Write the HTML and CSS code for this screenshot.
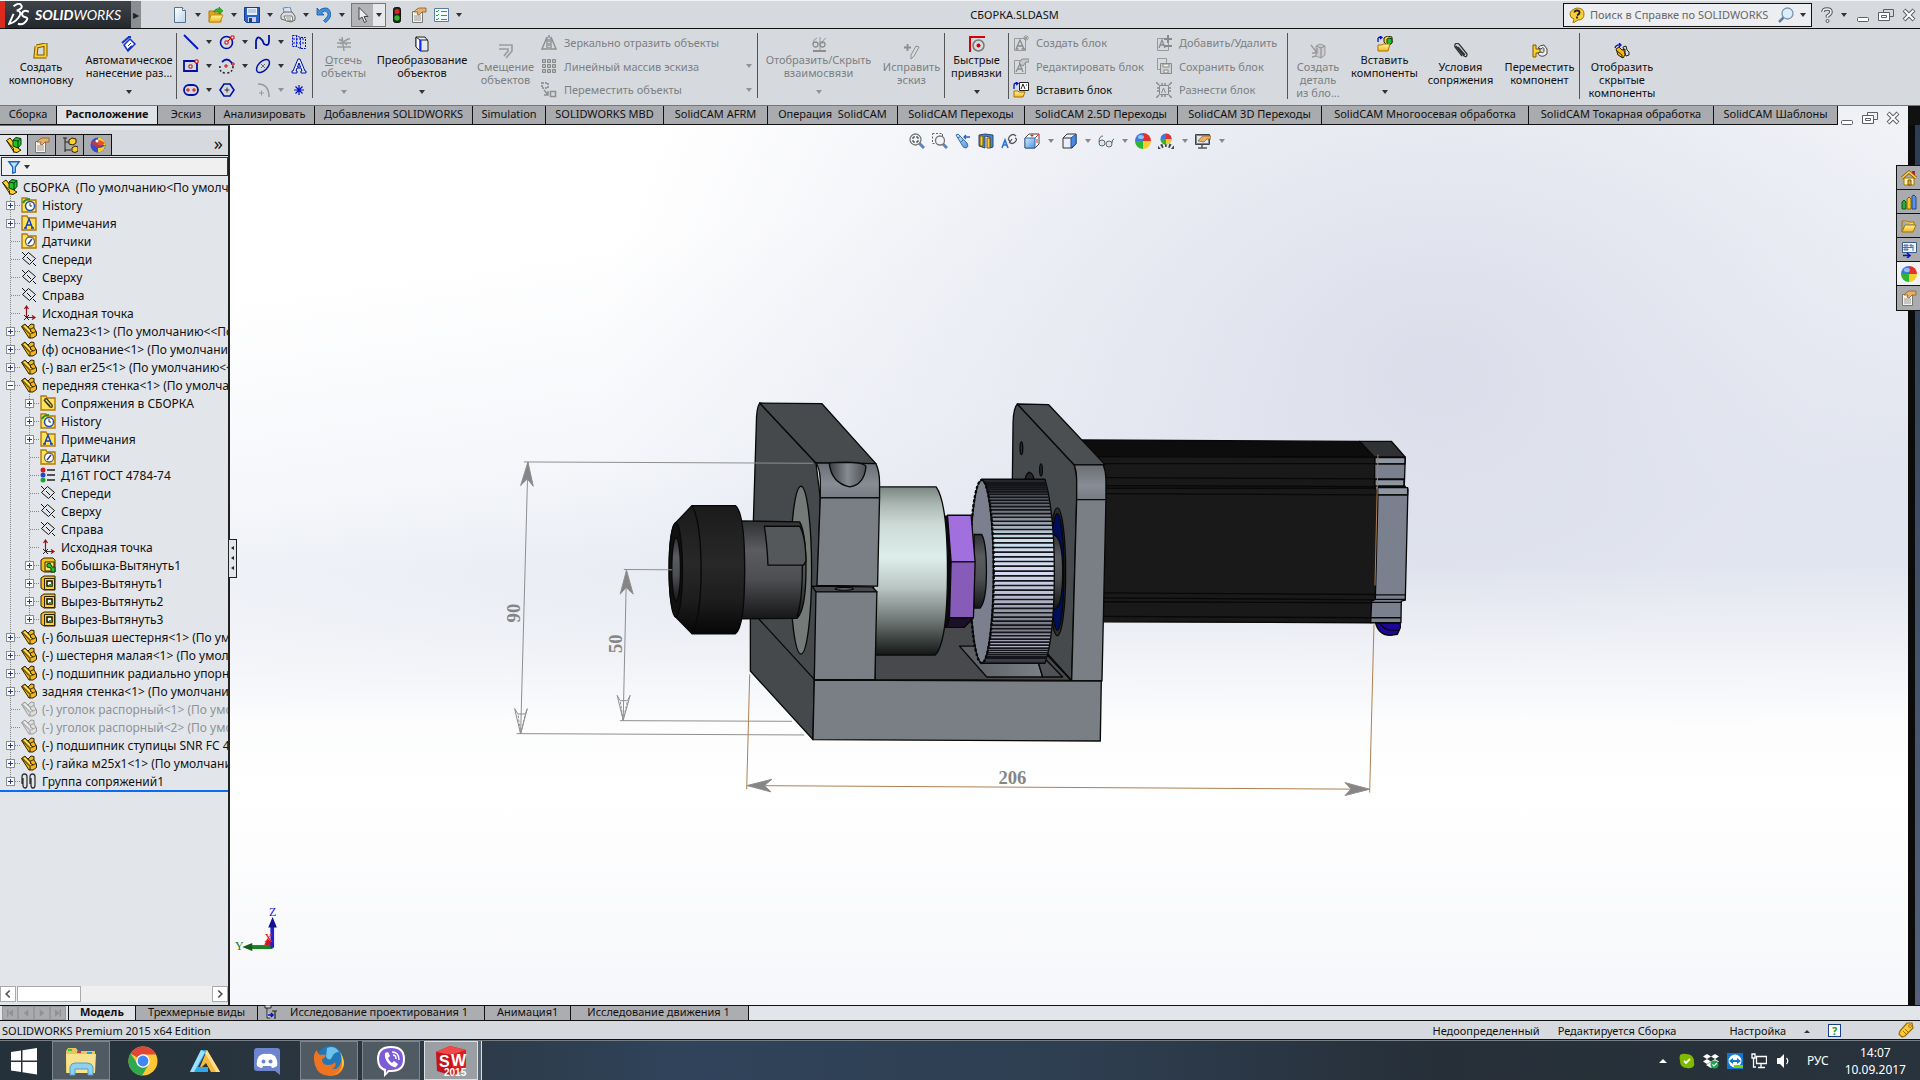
FILE: index.html
```html
<!DOCTYPE html>
<html lang="ru">
<head>
    <meta charset="UTF-8">
    <meta name="viewport" content="width=device-width, initial-scale=1.0">
    <title>СБОРКА.SLDASM - SOLIDWORKS</title>
    <link rel="stylesheet" href="styles.css">
</head>
<body>
    <!-- Icon set -->
    <svg class="defs" width="0" height="0" aria-hidden="true">
        <defs>
            <linearGradient id="paper" x1="0" y1="0" x2="1" y2="1"><stop offset="0" stop-color="#fff"/><stop offset="1" stop-color="#b9d3ea"/></linearGradient>
            <linearGradient id="gold" x1="0" y1="0" x2="0" y2="1"><stop offset="0" stop-color="#fff3a0"/><stop offset="1" stop-color="#f0b820"/></linearGradient>
            <linearGradient id="sky" x1="0" y1="0" x2="1" y2="1"><stop offset="0" stop-color="#d4ecff"/><stop offset="1" stop-color="#4f93dd"/></linearGradient>
        </defs>
        <symbol id="i-new" viewBox="0 0 16 16"><path d="M2.5.5h8l3 3v12h-11z" fill="url(#paper)" stroke="#5b7186"/><path d="M10.500.5v3h3" fill="#fff" stroke="#5b7186"/></symbol>
        <symbol id="i-open" viewBox="0 0 16 16"><path d="M1 4h5l1 2h6v9H1z" fill="#e5a51a" stroke="#b27a08"/><path d="M3 8h12l-3 7H1z" fill="url(#gold)" stroke="#c48d10"/><path d="M6 5q1-4 5-3V0l4 4-4 3V5q-3-1-5 0z" fill="#35b52a" stroke="#167a10" stroke-width=".6"/></symbol>
        <symbol id="i-save" viewBox="0 0 16 16"><path d="M.5.5h15v15h-13l-2-2z" fill="#2a62c8" stroke="#173c8c"/><path d="M3 1h10v7H3z" fill="#e6eefb"/><path d="M4 3h8M4 5h8" stroke="#8fa8d0"/><path d="M4 10h8v5H4z" fill="#ccd"/><path d="M5 11h3v4H5z" fill="#223c7a"/></symbol>
        <symbol id="i-print" viewBox="0 0 16 16"><path d="M4 5 3 1l7-1 2 6" fill="#cfe4fb" stroke="#6a89ad"/><path d="m1 8 3-3h8l3 4v4l-4 2-10-3z" fill="#ddd" stroke="#666"/><path d="M4 9h8l1 5H6z" fill="#fff" stroke="#777"/><path d="M6 11h5M7 13h4" stroke="#888"/></symbol>
        <symbol id="i-undo" viewBox="0 0 16 16"><path d="M1 1v7h7L5.500 5.500q4-3 6 0t-3 7l-1 1 2 2q6-4 5-9.500T9 1 3.500 3.500z" fill="#3f8fe0" stroke="#1c569c" stroke-width=".8"/></symbol>
        <symbol id="i-cursor" viewBox="0 0 16 16"><path d="M4 .5v12l3-2.500 2.500 5.500 2-1-2.500-5h4z" fill="#eee" stroke="#444"/></symbol>
        <symbol id="i-light" viewBox="0 0 16 16"><rect x="4.500" y=".5" width="7" height="15" rx="2" fill="#222" stroke="#111"/><circle cx="8" cy="4.500" r="2.500" fill="#e2231a"/><circle cx="8" cy="11" r="2.700" fill="#2fb52a"/></symbol>
        <symbol id="i-props" viewBox="0 0 16 16"><path d="M1.500 4.500h10v11h-10z" fill="#f4f2ec" stroke="#777"/><path d="M3 9h7M3 11h7M3 13h7" stroke="#999"/><path d="M3 5q2-3 5-4h7v4h-4l-3 3-2-1 1-2z" fill="#e8b06c" stroke="#8c5b22" stroke-width=".8"/></symbol>
        <symbol id="i-options" viewBox="0 0 16 16"><path d="M1.500 1.500h14v13h-14z" fill="#f3f8ff" stroke="#5c7c9c"/><path d="m3 4 1 1 2-2m-3 5 1 1 2-2m-3 5 1 1 2-2" fill="none" stroke="#2a9a30"/><path d="M8 4.500h6M8 8.500h6M8 12.500h6" stroke="#5577a0"/></symbol>
        <symbol id="i-layout" viewBox="0 0 16 16"><path d="m3.500 3.500 9-2v12M3.500 3.500l-1 10h11" fill="none" stroke="#7a5600" stroke-width="4"/><path d="m3.500 3.500 9-2v12M3.500 3.500l-1 10h11" fill="none" stroke="#ffcf30" stroke-width="2"/></symbol>
        <symbol id="i-dim" viewBox="0 0 16 16"><path d="m3 9 6-6 5 5-7 7z" fill="#fff" stroke="#1433c0" stroke-width="1.500"/><path d="m1 7 7-6M7 1h3M11 10l-4 4" stroke="#1433c0" stroke-width="2"/><path d="m7 10 3-3" stroke="#444"/></symbol>
        <symbol id="i-line" viewBox="0 0 16 16"><path d="m1 1 14 14" stroke="#0013c8" stroke-width="1.800"/></symbol>
        <symbol id="i-rect" viewBox="0 0 16 16"><path d="M1 3h13v10H1z" fill="none" stroke="#0013a0" stroke-width="1.800"/><path d="M6 7h3v3H6zM12 2h3v3h-3z" fill="#fff" stroke="#c00"/></symbol>
        <symbol id="i-slot" viewBox="0 0 16 16"><rect x="1" y="3" width="14" height="10" rx="5" fill="none" stroke="#0013a0" stroke-width="1.800"/><path d="M4 7h2v2H4zM10 7h2v2h-2z" fill="#fff" stroke="#c00"/></symbol>
        <symbol id="i-circle" viewBox="0 0 16 16"><circle cx="7.500" cy="8.500" r="6" fill="none" stroke="#0013a0" stroke-width="1.600"/><path d="M6 7h3v3H6zM12 2h3v3h-3zM9 7l3-3" fill="#fff" stroke="#c00"/></symbol>
        <symbol id="i-arc" viewBox="0 0 16 16"><path d="M3 4q5-5 9 0l2 3" fill="none" stroke="#0013a0" stroke-width="1.800"/><path d="M14 8q0 7-7 7T1 8" fill="none" stroke="#222" stroke-width="1.500" stroke-dasharray="2 2"/><path d="M6 7h2v2H6zM13 5h2v2h-2z" fill="#fff" stroke="#c00"/></symbol>
        <symbol id="i-poly" viewBox="0 0 16 16"><path d="M5 2h6l4 6-4 6H5L1 8z" fill="none" stroke="#0013a0" stroke-width="1.600"/><path d="M5.500 8h5M8 5.500v5" stroke="#333"/></symbol>
        <symbol id="i-spline" viewBox="0 0 16 16"><path d="M1 15V7q1-5 4-3t4 6q5 3 5-3V1" fill="none" stroke="#0013a0" stroke-width="1.800"/></symbol>
        <symbol id="i-ellipse" viewBox="0 0 16 16"><ellipse cx="8" cy="8" rx="8" ry="4.500" transform="rotate(-45 8 8)" fill="none" stroke="#0013a0" stroke-width="1.500"/><path d="m6 6 4 4m0-4-4 4" stroke="#555" stroke-width=".8"/></symbol>
        <symbol id="i-fillet" viewBox="0 0 16 16"><path d="M3 2q11 0 11 13" fill="none" stroke="#9a9a9a" stroke-width="1.500"/><path d="M4 11h5M6.500 8.500v5" stroke="#999"/></symbol>
        <symbol id="i-pattern" viewBox="0 0 16 16"><path d="M1.500 1.500h4l4 2h5v11h-5l-4-2h-4zM5.500 1.500v11m4-9v11M2 5h12M2 9h12" fill="none" stroke="#0013c8" stroke-dasharray="2 1"/></symbol>
        <symbol id="i-text" viewBox="0 0 16 16"><path d="M7 1h2l5 12h1v2h-5v-2h1l-1-3H6l-1 3h1v2H1v-2h1zm1 4L6.500 9h3z" fill="#dfe6fb" stroke="#0013a0" fill-rule="evenodd"/></symbol>
        <symbol id="i-point" viewBox="0 0 16 16"><path d="M3 8h10M8 3v10M4.500 4.500l7 7m0-7-7 7" stroke="#0013c8" stroke-width="1.200"/></symbol>
        <symbol id="i-trim" viewBox="0 0 16 16"><path d="M1 7h14M1 11h14M6 1l2 14M12 3 4 8m-1-5 8 6m-8-5h3M11 3h3" fill="none" stroke="#9a9a9a" stroke-width="1.500"/></symbol>
        <symbol id="i-convert" viewBox="0 0 16 16"><path d="M2 1h9l3 4v10H6L2 11z" fill="#e6eaf0" stroke="#222"/><path d="M2 1v10l4 4V4zM6 4h8" fill="#fff" stroke="#222"/><path d="M6.500 4v11" stroke="#0a2fff" stroke-width="2"/></symbol>
        <symbol id="i-offset" viewBox="0 0 16 16"><path d="M1 2h13v6l-6 7M1 6h9v2l-4 5" fill="none" stroke="#9c9c9c" stroke-width="1.700"/></symbol>
        <symbol id="i-mirror" viewBox="0 0 16 16"><path d="M6 2v12H1zM10 2v12h5z" fill="none" stroke="#8e8e8e" stroke-width="1.400"/><path d="M8 0v16" stroke="#8e8e8e" stroke-width="1.500" stroke-dasharray="3 1"/></symbol>
        <symbol id="i-array" viewBox="0 0 16 16"><path d="M1.500 1.500h3v3h-3zm5 0h3v3h-3zm5 0h3v3h-3zm-10 5h3v3h-3zm5 0h3v3h-3zm5 0h3v3h-3zm-10 5h3v3h-3zm5 0h3v3h-3zm5 0h3v3h-3z" fill="#bbb" stroke="#888"/></symbol>
        <symbol id="i-move" viewBox="0 0 16 16"><path d="M1 1h6v5H1z" fill="none" stroke="#999" stroke-width="2" stroke-dasharray="2 1"/><path d="m3 8 4 5m0-4v4H3M9.500 9.500h5v5h-5z" fill="none" stroke="#8e8e8e" stroke-width="1.500"/></symbol>
        <symbol id="i-relations" viewBox="0 0 16 16"><path d="M2 15h13" stroke="#8e8e8e" stroke-width="2"/><path d="M9 1v13M2 8q0-5 4-6M11 8q0-4 4-6" fill="none" stroke="#999"/><circle cx="4.500" cy="8.500" r="2.500" fill="none" stroke="#8e8e8e" stroke-width="1.300"/><circle cx="11.500" cy="8.500" r="2.500" fill="none" stroke="#8e8e8e" stroke-width="1.300"/></symbol>
        <symbol id="i-repair" viewBox="0 0 16 16"><path d="M0 4.500h7M3.500 1v7" stroke="#8e8e8e" stroke-width="1.800"/><path d="m7 12 5-9 3 1-5 9-3 3z" fill="#ddd" stroke="#8e8e8e"/></symbol>
        <symbol id="i-snap" viewBox="0 0 16 16"><path d="M1 16V1h15" fill="none" stroke="#d4000a" stroke-width="2"/><circle cx="9.500" cy="9.500" r="5.500" fill="none" stroke="#777" stroke-width="1.500"/><circle cx="9.500" cy="9.500" r="2" fill="#d4000a"/></symbol>
        <symbol id="i-block" viewBox="0 0 16 16"><path d="M1.500 3.500h11v12h-11z" fill="none" stroke="#999"/><path d="m3 14 4-9 4 9M4.500 11h5M2.500 14h3m3 0h4" fill="none" stroke="#8a8a8a" stroke-width="1.300"/><path d="M13 0v6m-3-3h6m-5-2 4 4m0-4-4 4" stroke="#999"/></symbol>
        <symbol id="i-block-edit" viewBox="0 0 16 16"><path d="M1.500 2.500h11v13h-11z" fill="none" stroke="#999"/><path d="m3 14 4-8 3 8M4.500 11h5" fill="none" stroke="#8a8a8a" stroke-width="1.300"/><path d="m6 5 3-4h7v3h-3l-3 4z" fill="#c8c8c8" stroke="#8a8a8a"/></symbol>
        <symbol id="i-block-insert" viewBox="0 0 16 16"><path d="M6.500.5h9v8h-9z" fill="#fff" stroke="#222"/><path d="m8 7 2-5 2 5m1-4h1" fill="none" stroke="#222"/><path d="M1 7V3q0-2 3-2M3 0l2 1.500L3 3" fill="none" stroke="#0013c8" stroke-width="1.300"/><path d="M1 9h4l1 1h6l-2 5H1z" fill="url(#gold)" stroke="#a87300"/></symbol>
        <symbol id="i-block-add" viewBox="0 0 16 16"><path d="M1.500 3.500h11v12h-11z" fill="none" stroke="#999"/><path d="m3 13 3-8 3 8M4 10h4" fill="none" stroke="#8a8a8a" stroke-width="1.300"/><path d="M12 0v8M8 4h8M8 11h8" stroke="#8a8a8a" stroke-width="2"/></symbol>
        <symbol id="i-block-save" viewBox="0 0 16 16"><path d="M1.500.5h9v11h-9z" fill="none" stroke="#999"/><path d="M4.500 5.500h11v10h-11z" fill="#d0d0d0" stroke="#8a8a8a"/><path d="M7 6h6v3H7zm1 6h4v3H8z" fill="#eee" stroke="#8a8a8a"/></symbol>
        <symbol id="i-block-explode" viewBox="0 0 16 16"><path d="M3.500 3.500h9v9h-9z" fill="none" stroke="#8a8a8a"/><path d="m0 0 3 3M16 0l-3 3M0 16l3-3m13 3-3-3M1 6h2M1 9h2m10-3h2m-2 3h2M6 1v2m3-2v2m-3 10v2m3-2v2" stroke="#8a8a8a" stroke-width="1.500"/><path d="m5.500 11 2-5 2 5" fill="none" stroke="#8a8a8a"/></symbol>
        <symbol id="i-asm" viewBox="0 0 16 16"><path d="M.5 3.500 4 1l9 11 2 1-4 2.500-3-.5z" fill="#ffd02c" stroke="#2a2200"/><path d="m.5 3.500 7 8v4" fill="none" stroke="#2a2200"/><path d="m7 3 3-2.500 5 1v6L12 11 7 9z" fill="#1fbf2f" stroke="#063f0a"/><path d="m7 3 5 1v6.500M12 4l3-2.500" fill="none" stroke="#063f0a"/></symbol>
        <symbol id="i-part" viewBox="0 0 16 16"><path d="M.5 3.500 4 1l3 3 3-3 3 .5V5l2.500 4v3.500L12 15H8z" fill="#f6b51a" stroke="#2d2300"/><path d="m1 3.500 8 8V15" fill="none" stroke="#2d2300"/><path d="m1.500 3 2.500-1.500 8 8.500-2.500 1z" fill="#ffdf55" stroke="#2d2300" stroke-width=".7"/><path d="m7 4 2.500 2L13 4.500M9.500 6v2.500L12 10l3-1.500" fill="none" stroke="#2d2300" stroke-width=".9"/></symbol>
        <symbol id="i-part-off" viewBox="0 0 16 16"><path d="M.5 3.500 4 1l3 3 3-3 3 .5V5l2.500 4v3.500L12 15H8z" fill="#dedede" stroke="#999"/><path d="m1 3.500 8 8V15" fill="none" stroke="#999"/><path d="m1.500 3 2.500-1.500 8 8.500-2.500 1z" fill="#eee" stroke="#999" stroke-width=".7"/><path d="m7 4 2.500 2L13 4.500M9.500 6v2.500L12 10l3-1.500" fill="none" stroke="#999" stroke-width=".9"/></symbol>
        <symbol id="i-makepart" viewBox="0 0 16 16"><path d="m6 3 4-2 5 2v9l-4 3-5-2z" fill="#ccc" stroke="#999"/><path d="m6 3 5 2v10m0-10 4-2M1 2l6 8M7 5v5H2m0 4 4-1" fill="none" stroke="#999" stroke-width="1.300"/></symbol>
        <symbol id="i-insert" viewBox="0 0 16 16"><path d="M1 6V3q0-2 3-2M3 0l2 1.500L3 3" fill="none" stroke="#0013c8" stroke-width="1.300"/><path d="m7 2 3-2 5 1v6l-4 3-4-4z" fill="#ffd02c" stroke="#2a2200"/><path d="m10 3 2-1 3 1v4l-3 2-2-2z" fill="#1fbf2f" stroke="#063f0a"/><path d="M1 9h4l1-1h7l-2 7H1z" fill="url(#gold)" stroke="#a87300"/></symbol>
        <symbol id="i-clip" viewBox="0 0 16 16"><path d="m3 3 8 10q3 2 3-2L6 1Q1-1 2 4l7 9m3-1L5 4" fill="none" stroke="#333" stroke-width="1.300"/></symbol>
        <symbol id="i-movecomp" viewBox="0 0 16 16"><path d="M1 2h3v4h4v4H4v4H1z" fill="#ffd02c" stroke="#7a5600"/><path d="M6 5q2-3 6-3l3 4v5l-3 2q-5 1-6-3l3-1q3 2 3-2T9 6z" fill="#eee" stroke="#444"/></symbol>
        <symbol id="i-showhid" viewBox="0 0 16 16"><path d="M1 5q1-4 6-3M5 0l2 2-2 2" fill="none" stroke="#0013c8" stroke-width="1.300"/><path d="m2 6 3-2 3 3 3-1v6l-2 3-5-3z" fill="#f6b51a" stroke="#2d2300"/><path d="m9 4 3-1 1 4 2 2v3l-3 1-2-5zM3 8l5 4v3" fill="none" stroke="#222"/></symbol>
        <symbol id="i-folder" viewBox="0 0 16 16"><path d="M1 1h5l1 2h8v12H1z" fill="#ffe25a" stroke="#b27a08" stroke-width="1.400"/></symbol>
        <symbol id="i-history" viewBox="0 0 16 16"><use href="#i-folder"/><circle cx="9" cy="9" r="4.500" fill="#fff" stroke="#1b55b8" stroke-width="1.500"/><path d="M9 6v3h2" fill="none" stroke="#333"/><path d="M2 6q2-4 7-4" fill="none" stroke="#22922a" stroke-width="2"/></symbol>
        <symbol id="i-notes" viewBox="0 0 16 16"><use href="#i-folder"/><path d="m4.500 13 3.500-9 3.500 9M6 10h4M3 13h3m4 0h3" fill="none" stroke="#123fc0" stroke-width="1.400"/></symbol>
        <symbol id="i-sensor" viewBox="0 0 16 16"><use href="#i-folder"/><circle cx="9" cy="8.500" r="4.500" fill="#fff" stroke="#666" stroke-width="1.300"/><path d="m7 11 4-5" stroke="#223fa0" stroke-width="1.500"/></symbol>
        <symbol id="i-mates" viewBox="0 0 16 16"><use href="#i-folder"/><path d="m4 5 6 7q3 1 2-2L7 4Q4 3 5 6l5 5" fill="none" stroke="#333" stroke-width="1.300"/></symbol>
        <symbol id="i-plane" viewBox="0 0 16 16"><path d="m7.500 1.500 7 6-6 6-7-6zM1 1l3 3m8 8 3 3M6 6l4 4" fill="none" stroke="#111"/></symbol>
        <symbol id="i-origin" viewBox="0 0 16 16"><path d="M5.500 13V1M3.500 4l2-3 2 3M5 12.500h9m-3-2 3 2-3 2" fill="none" stroke="#9c0f14" stroke-width="1.200"/><path d="m3 10 5 5m0-5-5 5" stroke="#222"/></symbol>
        <symbol id="i-material" viewBox="0 0 16 16"><circle cx="3" cy="3" r="2.500" fill="#d81820"/><circle cx="3" cy="8" r="2.500" fill="#2440d8"/><circle cx="3" cy="13" r="2.500" fill="#18a828"/><path d="M7 3h8M7 8h8M7 13h8" stroke="#222" stroke-width="1.500"/></symbol>
        <symbol id="i-boss" viewBox="0 0 16 16"><path d="m1 3 3-2h9l2 2v12H4l-3-2z" fill="#f6c01a" stroke="#2d2300"/><path d="M5 5h9v9H5z" fill="#ffe25a" stroke="#2d2300"/><path d="m7 7 3-1 2 4h3v5h-4V11L7 10z" fill="#25c23a" stroke="#063f0a"/></symbol>
        <symbol id="i-cut" viewBox="0 0 16 16"><path d="m1 3 3-2h11v14H4l-3-2z" fill="#f6c01a" stroke="#2d2300"/><path d="M4.500 3.500h10v11h-10z" fill="#ffd02c" stroke="#2d2300"/><path d="M7 6h5v5H7z" fill="#fff" stroke="#111" stroke-width="1.500"/><path d="M9 9h3v2H9z" fill="#1e9a2e"/></symbol>
        <symbol id="i-mategroup" viewBox="0 0 16 16"><path d="M1 11V4q0-3 2.500-3T6 4v8q0 3-2 3t-2-3V5M9 11V4q0-3 2.500-3T14 4v8q0 3-2 3t-2-3V5" fill="none" stroke="#333" stroke-width="1.300"/></symbol>
        <symbol id="i-config" viewBox="0 0 16 16"><path d="M1 1h4M3 1v14M3 5h4m-4 8h6" fill="none" stroke="#222"/><path d="m7 3 3-2 4 1v4l-3 2-4-1zm3 8 3-2 3 1v4l-3 1.500-3-1z" fill="#ffd02c" stroke="#2d2300"/></symbol>
        <symbol id="i-ball" viewBox="0 0 16 16"><path d="M8 8V0a8 8 0 0 1 8 8z" fill="#e33030"/><path d="M8 8h8a8 8 0 0 1-8 8z" fill="#f2cf2c"/><path d="M8 8v8a8 8 0 0 1-8-8z" fill="#2fb52f"/><path d="M8 8H0a8 8 0 0 1 8-8z" fill="#3b7be0"/><ellipse cx="6" cy="4" rx="3" ry="2" fill="#fff" opacity=".5"/></symbol>
        <symbol id="i-ball-dark" viewBox="0 0 16 16"><circle cx="8" cy="8" r="7.500" fill="#3350c8"/><path d="M8 8V.5A7.500 7.500 0 0 1 15.500 8z" fill="#f2cf2c"/><path d="M1 6q7-6 14 0-4 4-7 4T1 6z" fill="#e33030" opacity=".8"/><path d="M1 9q3 3 7 2v4.500Q2 15 1 9z" fill="#3350c8"/><path d="M8 11q5 0 7-3 0 7-7 7.500z" fill="#f2cf2c"/><circle cx="7" cy="4" r="1.500" fill="#fff"/></symbol>
        <symbol id="i-scene" viewBox="0 0 16 16"><path d="M0 16q8-8 16 0" fill="none" stroke="#444" stroke-width="4" stroke-dasharray="2 2"/><circle cx="8" cy="6" r="5.500" fill="#3b7be0"/><path d="M8 6V.5A5.500 5.500 0 0 1 13.500 6z" fill="#e33030"/><path d="M8 6h5.500A5.500 5.500 0 0 1 8 11.500z" fill="#f2cf2c"/><path d="M8 6v5.500A5.500 5.500 0 0 1 2.500 6z" fill="#2fb52f"/></symbol>
        <symbol id="i-funnel" viewBox="0 0 16 16"><path d="M2 2h12L9.500 8v6l-3 1V8z" fill="#bfe2ff" stroke="#1662c8" stroke-width="1.500"/></symbol>
        <symbol id="i-zoomfit" viewBox="0 0 16 16"><path d="m10 10 5 5" stroke="#5a86c0" stroke-width="3"/><circle cx="6.500" cy="6.500" r="5.500" fill="#eef4fa" stroke="#777" stroke-width="1.300"/><path d="M4 6V4h2m1 0h2v2m0 1v2H7M6 9H4V7" fill="none" stroke="#333"/></symbol>
        <symbol id="i-zoomarea" viewBox="0 0 16 16"><path d="M.5.5h10v10H.5z" fill="none" stroke="#666" stroke-dasharray="2 1.500"/><path d="m11 11 4 4" stroke="#5a86c0" stroke-width="3"/><circle cx="8" cy="7.500" r="4.500" fill="#eef4fa" stroke="#777" stroke-width="1.300"/></symbol>
        <symbol id="i-prev" viewBox="0 0 16 16"><path d="m1 2 2-1 9 9q2 4-1 5-3 0-4-3z" fill="url(#sky)" stroke="#3a6da8"/><path d="m3 5 3-2m0 6 3-3" stroke="#3a6da8"/><path d="M15 4H9m2-2L9 4l2 2" fill="none" stroke="#2a62c8" stroke-width="1.300"/></symbol>
        <symbol id="i-section" viewBox="0 0 16 16"><path d="m1 2 6-1 8 1v12l-3 1V4L7 3v12l-6-2z" fill="#4a86d8" stroke="#26497c"/><path d="M2 3h3v10H2zm7 2h3v10H9z" fill="#f4cc3a" stroke="#7a5600"/></symbol>
        <symbol id="i-dynview" viewBox="0 0 16 16"><path d="m1 15 3-8 3 8M2 12h4" fill="none" stroke="#2a72d0" stroke-width="1.600"/><path d="M15 3q-3-3-6 0t0 5M8 9q3 3 6 0t0-4M7 6l2 3 2-3" fill="none" stroke="#555" stroke-width="1.200"/></symbol>
        <symbol id="i-vieworient" viewBox="0 0 16 16"><path d="m1 5 4-4h10v10l-4 4H1z" fill="#fff" stroke="#444"/><path d="M1 5h10v10H1z" fill="url(#sky)" stroke="#2f68ad"/><path d="M11 5l4-4M8 1v3m-1.500-1.500h3M13 6v4" stroke="#c33"/></symbol>
        <symbol id="i-cube" viewBox="0 0 16 16"><path d="m2 5 4-4h9v10l-4 4H2z" fill="#e9eef8" stroke="#333"/><path d="m10 5 5-4v10l-5 4z" fill="#4a8ade" stroke="#1d4f9a"/><path d="M2 5h8" stroke="#333"/></symbol>
        <symbol id="i-glasses" viewBox="0 0 16 16"><circle cx="4" cy="10" r="3" fill="#d5e9fb" stroke="#666"/><circle cx="11" cy="11" r="3" fill="#d5e9fb" stroke="#666"/><path d="M1 9q0-6 4-6M14 10q0-4 2-4" fill="none" stroke="#666"/></symbol>
        <symbol id="i-display" viewBox="0 0 16 16"><path d="M.5 1.500h14v10H.5z" fill="#7b8694" stroke="#444"/><path d="M2 3h11v7H2z" fill="#e5e8ec"/><path d="M3 8q3-4 5-5h8v3h-4l-3 3z" fill="#e8b06c" stroke="#8c5b22" stroke-width=".7"/><path d="M7 12v3m-4 0h9" stroke="#555" stroke-width="1.500"/></symbol>
        <symbol id="i-home" viewBox="0 0 16 16"><path d="M11 1h3v6h-3z" fill="#b0262c"/><path d="M3 8h10v7H3z" fill="#fff3c4" stroke="#a87300"/><path d="M7 10h3v5H7z" fill="#e7b32a" stroke="#7a5600"/><path d="m1 8 7-6 7 6" fill="none" stroke="#8a6000" stroke-width="3"/><path d="m1 8 7-6 7 6" fill="none" stroke="#ffd65c" stroke-width="1.500"/></symbol>
        <symbol id="i-library" viewBox="0 0 16 16"><path d="m1 8 2-2 2 2v7H1z" fill="#22b13a" stroke="#0a5a18"/><path d="m6 5 2-2 2 2v10H6z" fill="#f4c52c" stroke="#8a6500"/><path d="m11 2 2-1 2 2v12h-4z" fill="#5c93e6" stroke="#23498c"/></symbol>
        <symbol id="i-files" viewBox="0 0 16 16"><path d="M1 3h5l1 1h6v3M1 3v11" fill="#ffd65c" stroke="#a87300"/><path d="m1 14 3-7h11l-3 7z" fill="url(#gold)" stroke="#a87300"/></symbol>
        <symbol id="i-palette" viewBox="0 0 16 16"><path d="M1.500.5h14v10h-14z" fill="#eef3fb" stroke="#3c5a8a"/><path d="M3 3h4v1H3zm6 0h2v1H9zM3 7h4v1H3z" fill="#f4cc3a" stroke="#4b6ea8"/><path d="M12 3v6M2 5.500h10" stroke="#4b6ea8"/><path d="M2 13.500h6M6 11l3 2.500L6 16" fill="none" stroke="#0013c8" stroke-width="1.600"/></symbol>
        <symbol id="i-helpball" viewBox="0 0 16 16"><path d="M8 1q7 0 7 6t-6 6l-5 3 1-4Q1 11 1 7t7-6z" fill="#f7cf3e" stroke="#a87300"/><path d="M5.500 5.500q0-2 2.500-2t2.500 2-2.500 2.500M8 9.500v2" fill="none" stroke="#222" stroke-width="1.800"/></symbol>
        <symbol id="i-mag" viewBox="0 0 16 16"><path d="m1 15 5-5" stroke="#5a7fa8" stroke-width="2.500"/><circle cx="9.500" cy="6.500" r="5.500" fill="#dcedfb" stroke="#7d93ab" stroke-width="1.300"/></symbol>
        <symbol id="i-q" viewBox="0 0 16 16"><path d="M4 5q0-3 4-3t4 3q0 2-3.500 4v1.500" fill="none" stroke="#555" stroke-width="3.500"/><path d="M4 5q0-3 4-3t4 3q0 2-3.500 4v1.500" fill="none" stroke="#f4f4f6" stroke-width="1.500"/><circle cx="8.500" cy="14" r="1.500" fill="#eee" stroke="#555"/></symbol>
        <symbol id="i-min" viewBox="0 0 16 16"><rect x="2.500" y="10.500" width="11" height="4" rx="1" fill="#fff" stroke="#5c5f66"/></symbol>
        <symbol id="i-restore" viewBox="0 0 16 16"><path d="M5.500 2.500h10v7h-4M5.500 2.500v3" fill="none" stroke="#5c5f66"/><path d="M.5 5.500h11v8H.5z" fill="#fff" stroke="#5c5f66"/><path d="M3.500 8.500h5v2h-5z" fill="none" stroke="#5c5f66"/></symbol>
        <symbol id="i-close" viewBox="0 0 16 16"><path d="m3 3 10 10m0-10L3 13" stroke="#5c5f66" stroke-width="4"/><path d="m3.500 3.500 9 9m0-9-9 9" stroke="#fff" stroke-width="2"/></symbol>
        <symbol id="i-design" viewBox="0 0 16 16"><path d="M3 1h6v3H3zm2 3v10h3" fill="#ddd" stroke="#222"/><path d="M6 11h5M9 9l2 2-2 2" fill="none" stroke="#0013c8" stroke-width="1.500"/><path d="M10 7h5m-2 0v8" stroke="#222" stroke-width="1.200"/></symbol>
        <symbol id="i-first" viewBox="0 0 16 16"><path d="M5 3v10" stroke="#8f9194" stroke-width="2"/><path d="M12 3v10L6 8z" fill="#8f9194"/></symbol>
        <symbol id="i-back" viewBox="0 0 16 16"><path d="M11 3v10L5 8z" fill="#8f9194"/></symbol>
        <symbol id="i-tag" viewBox="0 0 16 16"><path d="m2 9 7-8h5l1 5-8 8-3 1-3-3z" fill="#fcc933" stroke="#9c6c00" stroke-width="1.200"/><circle cx="12" cy="4" r="1.300" fill="#fff" stroke="#9c6c00"/><path d="m5 9 3 3m-1-5 3 3" stroke="#9c6c00"/></symbol>
    </svg>

    <header class="titlebar">
        <div class="brand">
            <svg class="brand-mark" viewBox="0 0 20 22" aria-hidden="true"><path d="M5 3q5-4 7-1t-4 5q6 1 1 7-3 4-8 5l4-9M19 8q-5-2-6 1t3 4-2 6q-2 1-5 0" fill="none" stroke="#fff" stroke-width="1.800"/></svg>
            <span class="brand-name"><b>SOLID</b>WORKS</span>
        </div>
        <button class="brand-more" aria-label="Меню">▶</button>
        <div class="qat">
            <button class="tool" aria-label="Создать"><svg><use href="#i-new"/></svg></button><button class="caret" aria-label="Ещё"></button>
            <button class="tool" aria-label="Открыть"><svg><use href="#i-open"/></svg></button><button class="caret" aria-label="Ещё"></button>
            <button class="tool" aria-label="Сохранить"><svg><use href="#i-save"/></svg></button><button class="caret" aria-label="Ещё"></button>
            <button class="tool" aria-label="Печать"><svg><use href="#i-print"/></svg></button><button class="caret" aria-label="Ещё"></button>
            <button class="tool" aria-label="Отменить"><svg><use href="#i-undo"/></svg></button><button class="caret" aria-label="Ещё"></button>
            <span class="picker"><button class="tool pressed" aria-label="Выбрать"><svg><use href="#i-cursor"/></svg></button><button class="caret" aria-label="Ещё"></button></span>
            <button class="tool wide" aria-label="Перестроить"><svg><use href="#i-light"/></svg></button>
            <button class="tool wide" aria-label="Свойства"><svg><use href="#i-props"/></svg></button>
            <button class="tool wide" aria-label="Настройки"><svg><use href="#i-options"/></svg></button><button class="caret narrow" aria-label="Ещё"></button>
        </div>
        <h1 class="doc-title">СБОРКА.SLDASM</h1>
        <div class="search">
            <svg><use href="#i-helpball"/></svg>
            <input type="text" aria-label="Поиск в Справке" placeholder="Поиск в Справке по SOLIDWORKS">
            <button class="tool" aria-label="Найти"><svg><use href="#i-mag"/></svg></button><button class="caret" aria-label="Ещё"></button>
        </div>
        <div class="win-buttons">
            <button class="tool" aria-label="Справка"><svg><use href="#i-q"/></svg></button><button class="caret" aria-label="Ещё"></button>
            <button class="tool wide" aria-label="Свернуть"><svg><use href="#i-min"/></svg></button>
            <button class="tool wide" aria-label="Восстановить"><svg><use href="#i-restore"/></svg></button>
            <button class="tool wide" aria-label="Закрыть"><svg><use href="#i-close"/></svg></button>
        </div>
    </header>

    <section class="ribbon">
        <button class="cmd"><svg><use href="#i-layout"/></svg>Создать<br>компоновку</button>
        <button class="cmd drop"><svg><use href="#i-dim"/></svg>Автоматическое<br>нанесение раз...</button>
        <div class="sketch sep">
            <button class="tool" aria-label="Линия"><svg><use href="#i-line"/></svg></button><button class="caret" aria-label="Ещё"></button>
            <button class="tool" aria-label="Окружность"><svg><use href="#i-circle"/></svg></button><button class="caret" aria-label="Ещё"></button>
            <button class="tool" aria-label="Сплайн"><svg><use href="#i-spline"/></svg></button><button class="caret" aria-label="Ещё"></button>
            <button class="tool" aria-label="Плоскость"><svg><use href="#i-pattern"/></svg></button>
            <button class="tool" aria-label="Прямоугольник"><svg><use href="#i-rect"/></svg></button><button class="caret" aria-label="Ещё"></button>
            <button class="tool" aria-label="Дуга"><svg><use href="#i-arc"/></svg></button><button class="caret" aria-label="Ещё"></button>
            <button class="tool" aria-label="Эллипс"><svg><use href="#i-ellipse"/></svg></button><button class="caret" aria-label="Ещё"></button>
            <button class="tool" aria-label="Текст"><svg><use href="#i-text"/></svg></button>
            <button class="tool" aria-label="Прорезь"><svg><use href="#i-slot"/></svg></button><button class="caret" aria-label="Ещё"></button>
            <button class="tool" aria-label="Многоугольник"><svg><use href="#i-poly"/></svg></button><span></span>
            <button class="tool" aria-label="Скругление" disabled><svg><use href="#i-fillet"/></svg></button><button class="caret" aria-label="Ещё" disabled></button>
            <button class="tool" aria-label="Точка"><svg><use href="#i-point"/></svg></button>
        </div>
        <button class="cmd drop sep" disabled><svg><use href="#i-trim"/></svg><u>О</u>тсечь<br>объекты</button>
        <button class="cmd drop"><svg><use href="#i-convert"/></svg>Преобразование<br>объектов</button>
        <button class="cmd" disabled><svg><use href="#i-offset"/></svg>Смещение<br>объектов</button>
        <div class="cmd-list">
            <button disabled><svg><use href="#i-mirror"/></svg>Зеркально отразить объекты</button>
            <button class="more" disabled><svg><use href="#i-array"/></svg>Линейный массив эскиза</button>
            <button class="more" disabled><svg><use href="#i-move"/></svg>Переместить объекты</button>
        </div>
        <button class="cmd drop sep" disabled><svg><use href="#i-relations"/></svg>Отобразить/Скрыть<br>взаимосвязи</button>
        <button class="cmd" disabled><svg><use href="#i-repair"/></svg>Исправить<br>эскиз</button>
        <button class="cmd drop sep"><svg><use href="#i-snap"/></svg>Быстрые<br>привязки</button>
        <div class="cmd-list two sep">
            <button disabled><svg><use href="#i-block"/></svg>Создать блок</button>
            <button disabled><svg><use href="#i-block-add"/></svg>Добавить/Удалить</button>
            <button disabled><svg><use href="#i-block-edit"/></svg>Редактировать блок</button>
            <button disabled><svg><use href="#i-block-save"/></svg>Сохранить блок</button>
            <button><svg><use href="#i-block-insert"/></svg>Вставить блок</button>
            <button disabled><svg><use href="#i-block-explode"/></svg>Разнести блок</button>
        </div>
        <button class="cmd tall sep" disabled><svg><use href="#i-makepart"/></svg>Создать<br>деталь<br>из бло...</button>
        <button class="cmd drop"><svg><use href="#i-insert"/></svg>Вставить<br>компоненты</button>
        <button class="cmd"><svg><use href="#i-clip"/></svg>Условия<br>сопряжения</button>
        <button class="cmd"><svg><use href="#i-movecomp"/></svg>Переместить<br>компонент</button>
        <div class="sep">
            <button class="cmd tall last"><svg><use href="#i-showhid"/></svg>Отобразить<br>скрытые<br>компоненты</button>
        </div>
    </section>

    <nav class="tabs">
        <button>Сборка</button>
        <button class="active">Расположение</button>
        <button>Эскиз</button>
        <button>Анализировать</button>
        <button>Добавления SOLIDWORKS</button>
        <button>Simulation</button>
        <button>SOLIDWORKS MBD</button>
        <button>SolidCAM AFRM</button>
        <button>Операция&nbsp; SolidCAM</button>
        <button>SolidCAM Переходы</button>
        <button>SolidCAM 2.5D Переходы</button>
        <button>SolidCAM 3D Переходы</button>
        <button>SolidCAM Многоосевая обработка</button>
        <button>SolidCAM Токарная обработка</button>
        <button>SolidCAM Шаблоны</button>
        <div class="doc-buttons">
            <button class="tool" aria-label="Свернуть документ"><svg><use href="#i-min"/></svg></button>
            <button class="tool" aria-label="Восстановить документ"><svg><use href="#i-restore"/></svg></button>
            <button class="tool" aria-label="Закрыть документ"><svg><use href="#i-close"/></svg></button>
        </div>
    </nav>

    <main class="workspace">
        <aside class="panel">
            <div class="panel-tabs">
                <button class="active" aria-label="Дерево конструирования"><svg><use href="#i-asm"/></svg></button>
                <button aria-label="Свойства"><svg><use href="#i-props"/></svg></button>
                <button aria-label="Конфигурации"><svg><use href="#i-config"/></svg></button>
                <button aria-label="Внешний вид"><svg><use href="#i-ball-dark"/></svg></button>
                <span class="chevrons">»</span>
            </div>
            <div class="filter">
                <svg><use href="#i-funnel"/></svg><button class="caret" aria-label="Ещё"></button>
                <input type="text" aria-label="Фильтр">
            </div>
            <div class="tree">
                <div class="root"><svg><use href="#i-asm"/></svg>СБОРКА&nbsp; (По умолчанию&lt;По умолчанию</div>
                <ul>
                    <li><div class="row"><button class="exp" aria-label="Развернуть"></button><svg><use href="#i-history"/></svg>History</div></li>
                    <li><div class="row"><button class="exp" aria-label="Развернуть"></button><svg><use href="#i-notes"/></svg>Примечания</div></li>
                    <li><div class="row leaf"><svg><use href="#i-sensor"/></svg>Датчики</div></li>
                    <li><div class="row leaf"><svg><use href="#i-plane"/></svg>Спереди</div></li>
                    <li><div class="row leaf"><svg><use href="#i-plane"/></svg>Сверху</div></li>
                    <li><div class="row leaf"><svg><use href="#i-plane"/></svg>Справа</div></li>
                    <li><div class="row leaf"><svg><use href="#i-origin"/></svg>Исходная точка</div></li>
                    <li><div class="row"><button class="exp" aria-label="Развернуть"></button><svg><use href="#i-part"/></svg>Nema23&lt;1&gt; (По умолчанию&lt;&lt;По умолчанию</div></li>
                    <li><div class="row"><button class="exp" aria-label="Развернуть"></button><svg><use href="#i-part"/></svg>(ф) основание&lt;1&gt; (По умолчанию&lt;&lt;По умолчанию</div></li>
                    <li><div class="row"><button class="exp" aria-label="Развернуть"></button><svg><use href="#i-part"/></svg>(-) вал er25&lt;1&gt; (По умолчанию&lt;&lt;По умолчанию</div></li>
                    <li>
                        <div class="row"><button class="exp open" aria-label="Свернуть"></button><svg><use href="#i-part"/></svg>передняя стенка&lt;1&gt; (По умолчанию&lt;&lt;По умолчанию</div>
                        <ul>
                            <li><div class="row"><button class="exp" aria-label="Развернуть"></button><svg><use href="#i-mates"/></svg>Сопряжения в СБОРКА</div></li>
                            <li><div class="row"><button class="exp" aria-label="Развернуть"></button><svg><use href="#i-history"/></svg>History</div></li>
                            <li><div class="row"><button class="exp" aria-label="Развернуть"></button><svg><use href="#i-notes"/></svg>Примечания</div></li>
                            <li><div class="row leaf"><svg><use href="#i-sensor"/></svg>Датчики</div></li>
                            <li><div class="row leaf"><svg><use href="#i-material"/></svg>Д16Т ГОСТ 4784-74</div></li>
                            <li><div class="row leaf"><svg><use href="#i-plane"/></svg>Спереди</div></li>
                            <li><div class="row leaf"><svg><use href="#i-plane"/></svg>Сверху</div></li>
                            <li><div class="row leaf"><svg><use href="#i-plane"/></svg>Справа</div></li>
                            <li><div class="row leaf"><svg><use href="#i-origin"/></svg>Исходная точка</div></li>
                            <li><div class="row"><button class="exp" aria-label="Развернуть"></button><svg><use href="#i-boss"/></svg>Бобышка-Вытянуть1</div></li>
                            <li><div class="row"><button class="exp" aria-label="Развернуть"></button><svg><use href="#i-cut"/></svg>Вырез-Вытянуть1</div></li>
                            <li><div class="row"><button class="exp" aria-label="Развернуть"></button><svg><use href="#i-cut"/></svg>Вырез-Вытянуть2</div></li>
                            <li><div class="row"><button class="exp" aria-label="Развернуть"></button><svg><use href="#i-cut"/></svg>Вырез-Вытянуть3</div></li>
                        </ul>
                    </li>
                    <li><div class="row"><button class="exp" aria-label="Развернуть"></button><svg><use href="#i-part"/></svg>(-) большая шестерня&lt;1&gt; (По умолчанию</div></li>
                    <li><div class="row"><button class="exp" aria-label="Развернуть"></button><svg><use href="#i-part"/></svg>(-) шестерня малая&lt;1&gt; (По умолчанию</div></li>
                    <li><div class="row"><button class="exp" aria-label="Развернуть"></button><svg><use href="#i-part"/></svg>(-) подшипник радиально упорный&lt;1&gt;</div></li>
                    <li><div class="row"><button class="exp" aria-label="Развернуть"></button><svg><use href="#i-part"/></svg>задняя стенка&lt;1&gt; (По умолчанию&lt;&lt;По</div></li>
                    <li><div class="row leaf off"><svg><use href="#i-part-off"/></svg>(-) уголок распорный&lt;1&gt; (По умолчанию</div></li>
                    <li><div class="row leaf off"><svg><use href="#i-part-off"/></svg>(-) уголок распорный&lt;2&gt; (По умолчанию</div></li>
                    <li><div class="row"><button class="exp" aria-label="Развернуть"></button><svg><use href="#i-part"/></svg>(-) подшипник ступицы SNR FC 40570</div></li>
                    <li><div class="row"><button class="exp" aria-label="Развернуть"></button><svg><use href="#i-part"/></svg>(-) гайка м25х1&lt;1&gt; (По умолчанию&lt;&lt;По</div></li>
                    <li><div class="row"><button class="exp" aria-label="Развернуть"></button><svg><use href="#i-mategroup"/></svg>Группа сопряжений1</div></li>
                </ul>
            </div>
            <div class="hscroll">
                <button aria-label="Влево"><svg viewBox="0 0 16 16"><path d="M10 4 6 8l4 4" fill="none" stroke="#555" stroke-width="2"/></svg></button>
                <div class="track"><div class="thumb"></div></div>
                <button aria-label="Вправо"><svg viewBox="0 0 16 16"><path d="m6 4 4 4-4 4" fill="none" stroke="#555" stroke-width="2"/></svg></button>
            </div>
        </aside>

        <section class="viewport">
            <svg class="model" viewBox="230 125 1678 881" role="img" aria-label="Модель сборки">
                <defs>
                    <linearGradient id="steel" x1="0" y1="0" x2="0" y2="1"><stop offset="0" stop-color="#303133"/><stop offset=".3" stop-color="#5a5c60"/><stop offset=".6" stop-color="#4c4e51"/><stop offset="1" stop-color="#161617"/></linearGradient>
                    <linearGradient id="black" x1="0" y1="0" x2="0" y2="1"><stop offset="0" stop-color="#1b1b1b"/><stop offset=".45" stop-color="#282828"/><stop offset=".75" stop-color="#1c1c1c"/><stop offset="1" stop-color="#060606"/></linearGradient>
                    <linearGradient id="white" x1="0" y1="0" x2="0" y2="1"><stop offset="0" stop-color="#7b8582"/><stop offset=".1" stop-color="#a9b5b1"/><stop offset=".22" stop-color="#ccdad6"/><stop offset=".42" stop-color="#deeeea"/><stop offset=".6" stop-color="#b9c5c2"/><stop offset=".8" stop-color="#6c7472"/><stop offset="1" stop-color="#141615"/></linearGradient>
                    <linearGradient id="teeth" x1="0" y1="0" x2="0" y2="1"><stop offset="0" stop-color="#24252a"/><stop offset=".2" stop-color="#80848e"/><stop offset=".32" stop-color="#c8dce8"/><stop offset=".5" stop-color="#d6dbf2"/><stop offset=".65" stop-color="#b4b7cb"/><stop offset=".8" stop-color="#72737e"/><stop offset=".92" stop-color="#b8b8d0"/><stop offset="1" stop-color="#202126"/></linearGradient>
                    <linearGradient id="round" x1="0" y1="0" x2="0" y2="1"><stop offset="0" stop-color="#6a6e74"/><stop offset=".6" stop-color="#868d94"/><stop offset="1" stop-color="#777b83"/></linearGradient>
                    <linearGradient id="notch"><stop offset="0" stop-color="#3c3e41"/><stop offset=".5" stop-color="#858b92"/><stop offset="1" stop-color="#4d5054"/></linearGradient>
                    <linearGradient id="pocket"><stop offset="0" stop-color="#585c60"/><stop offset="1" stop-color="#7b8086"/></linearGradient>
                    <clipPath id="gear"><path d="M1025 299H1215Q1243 400 1243 575 1243 770 1215 852H1025z"/></clipPath>
                </defs>
                <g class="solid" transform="translate(640 380) scale(.33333)">
                    <!-- motor -->
                    <path d="M1320 181 2160 185 2205 233 1370 231z" fill="#0d0d0d"/>
                    <path d="M1370 231 2205 233 2208 320 2215 345 2207 660 2193 730 1380 727z" fill="#191919"/>
                    <path d="M1390 252H2205M1390 294 2205 298M1390 318 2208 321M1390 326 2208 326M1390 342 2215 346M1390 640 2207 645M1390 655 2207 661M1390 667 2195 670M1390 711 2193 715" class="thin"/>
                    <path d="M2160 185H2255L2297 233H2205z" fill="#303134"/>
                    <path d="M2205 233H2297L2294 320 2305 328 2297 662 2285 665 2284 730H2193L2196 665 2207 660 2215 345 2205 320z" fill="#7b808e"/>
                    <path d="M2206 234H2296V253H2206zM2206 300H2293V320H2206zM2214 324H2304V346H2214z" fill="#8e96a2"/>
                    <path d="M2205 253H2297M2205 298H2294M2205 320H2298M2214 346H2305M2207 646H2297M2207 660H2297M2196 669H2285M2193 715H2284" class="thin"/>
                    <path d="M2208 732Q2218 768 2252 768L2273 765 2282 745V732z" fill="#1b0796"/>
                    <path d="M2222 734Q2236 753 2260 752H2280" class="line"/>
                    <!-- base and rear wall -->
                    <path d="M705 700H1110L1295 903 705 901z" fill="#47494c"/>
                    <path d="M1132 73Q1120 85 1119 130L1112 700 1295 903 1310 360V290L1303 256z" fill="#474a4d"/>
                    <path d="M1132 73 1226 75 1395 255 1303 256z" fill="#4c4f52"/>
                    <path d="M1303 256H1390Q1398 275 1398 300V360H1310V300Q1310 275 1303 256z" fill="url(#round)"/>
                    <path d="M1310 360H1398L1386 905H1295z" fill="#7a7e85"/>
                    <path d="M958 800 1040 893H1208L1195 850 1100 800z" fill="url(#pocket)"/>
                    <path d="M1195 850 1208 893H1268L1215 838M1222 828 1290 900" fill="#505356"/>
                    <ellipse cx="1144" cy="206" rx="4" ry="19" fill="#2c2d2f"/>
                    <ellipse cx="1203" cy="271" rx="4" ry="18" fill="#2c2d2f"/>
                    <path d="M1155 300Q1160 278 1169 278 1180 284 1182 300z" fill="#242527"/>
                    <!-- rear bearing and shaft -->
                    <ellipse cx="1252" cy="577" rx="25" ry="192" fill="#2b2c2e"/>
                    <ellipse cx="1252" cy="577" rx="20" ry="175" fill="#000d58"/>
                    <path d="M1240 465Q1268 470 1268 577 1268 690 1240 690z" fill="url(#steel)"/>
                    <!-- gear -->
                    <path d="M1025 299H1215Q1243 400 1243 575 1243 770 1215 852H1025z" fill="url(#teeth)"/>
                    <path clip-path="url(#gear)" class="teeth" d="M1020 309h225m-225 4h225m-225 5h225m-225 6h225m-225 6h225m-225 7h225m-225 7h225m-225 9h225m-225 9h225m-225 9h225m-225 10h225m-225 10h225m-225 11h225m-225 11h225m-225 12h225m-225 12h225m-225 13h225m-225 13h225m-225 13h225m-225 14h225m-225 14h225m-225 14h225m-225 14h225m-225 14h225m-225 14h225m-225 15h225m-225 14h225m-225 15h225m-225 14h225m-225 14h225m-225 14h225m-225 14h225m-225 14h225m-225 13h225m-225 13h225m-225 13h225m-225 12h225m-225 12h225m-225 11h225m-225 11h225m-225 10h225m-225 10h225m-225 9h225m-225 9h225m-225 9h225m-225 7h225m-225 7h225m-225 6h225m-225 6h225m-225 5h225"/>
                    <ellipse cx="1025" cy="576" rx="35" ry="274" fill="#7b7f8e"/>
                    <ellipse cx="1025" cy="576" rx="36" ry="275" class="cogs"/>
                    <path d="M1002 465H1025Q1039 490 1039 577 1039 665 1020 686H1002z" fill="url(#steel)"/>
                    <!-- lock nut -->
                    <path d="M916 410H926L933 547 928 744H916z" fill="#0e0a14"/>
                    <path d="M922 407H993L1005 547H933z" fill="#a26fdf"/>
                    <path d="M933 547H1005L1000 715H928z" fill="#875cb8"/>
                    <path d="M928 715H1000L972 744H920z" fill="#1c1029"/>
                    <!-- sleeve -->
                    <path d="M700 322H888Q922 370 922 575 922 790 885 827H700z" fill="url(#white)"/>
                    <!-- front wall -->
                    <path d="M358 70Q348 85 348 130L330 720V875L518 1081 522 902 540 355 527 250z" fill="#46494c"/>
                    <path d="M358 70 545 72 707 252 527 250z" fill="#484b4e"/>
                    <path d="M355 718 522 900" class="line"/>
                    <ellipse cx="482" cy="572" rx="32" ry="252" fill="#737a78"/>
                    <path d="M527 250 707 252Q718 275 718 310V355H540V300Q538 265 527 250z" fill="url(#round)"/>
                    <path d="M540 355H718L712 620 530 618z" fill="#7a7e85"/>
                    <path d="M515 620 695 622 710 637H527z" fill="#46484b"/>
                    <ellipse cx="612" cy="628" rx="27" ry="4" fill="#85898d"/>
                    <path d="M527 637H710L704 901H522z" fill="#7a7e85"/>
                    <path d="M567 252Q568 248 622 248 677 250 677 262 672 315 628 322 574 310 567 252z" fill="url(#notch)"/>
                    <path d="M522 902 1384 905 1381 1085 518 1081z" fill="#7a7e85"/>
                    <!-- spindle -->
                    <path d="M300 424 478 427Q497 460 497 570 497 690 470 717L300 718z" fill="url(#steel)"/>
                    <path d="M372 440H478Q496 470 497 545L490 557H383Q380 490 372 440z" fill="#55585a"/>
                    <path d="M486 557Q487 660 470 712" class="line"/>
                    <path d="M155 378H285Q313 400 313 570 313 745 285 763H155L105 712Q86 680 86 570 86 450 105 430z" fill="url(#black)"/>
                    <path d="M155 378Q182 430 182 570 182 710 155 763" class="line"/>
                    <ellipse cx="106" cy="571" rx="20" ry="142" fill="#101010"/>
                    <ellipse cx="107" cy="570" rx="13" ry="95" fill="url(#steel)"/>
                </g>
                <g class="dims" transform="translate(490 440) scale(.33333)">
                    <path d="M100 67 968 71M78 883 942 887M112 67 90 884M400 390 545 391M388 844 905 846M408 392 398 843"/>
                    <path class="warm" d="M778 705 769 1050M770 1039 2640 1050M2665 45 2656 438M2653 555 2640 1060"/>
                    <path class="head" d="M112 67 128 140 110 118 90 138zM408 392 428 464 407 444 389 464zM770 1039 845 1020 822 1039 842 1058zM2640 1050 2566 1030 2584 1049 2566 1069z"/>
                    <path d="M90 884 72 808 82 824 104 824 110 808zM398 843 380 768 389 784 411 784 419 768z"/>
                    <path d="M90 884 82 824M90 884 104 824M398 843 389 784M398 843 411 784" stroke-dasharray="8 4"/>
                    <text x="1525" y="1034">206</text>
                    <text transform="translate(88 549) rotate(-90)">90</text>
                    <text transform="translate(393 641) rotate(-90)">50</text>
                </g>
                <!-- axis triad -->
                <g class="triad" transform="translate(0 880) scale(.33333)">
                    <path d="M815 204H745" stroke="#1f7f24" stroke-width="12"/><path d="M724 204 754 192V216z" fill="#145c18"/>
                    <path d="M790 197 800 178 812 190V200z" fill="#d4161a"/>
                    <path d="M814 206V140" stroke="#2020d0" stroke-width="11"/><path d="M815 114 828 145H802z" fill="#13138e"/>
                    <text x="804" y="110" fill="#1414e0">Z</text><text x="702" y="212" fill="#128018">Y</text><text x="790" y="188" fill="#e01010" font-size="26">X</text>
                </g>
            </svg>
            <div class="hud">
                <button class="tool" aria-label="Вписать"><svg><use href="#i-zoomfit"/></svg></button>
                <button class="tool" aria-label="Увеличить область"><svg><use href="#i-zoomarea"/></svg></button>
                <button class="tool" aria-label="Предыдущий вид"><svg><use href="#i-prev"/></svg></button>
                <button class="tool" aria-label="Разрез"><svg><use href="#i-section"/></svg></button>
                <button class="tool" aria-label="Динамический вид"><svg><use href="#i-dynview"/></svg></button>
                <button class="tool" aria-label="Ориентация"><svg><use href="#i-vieworient"/></svg></button><button class="caret" aria-label="Ещё"></button>
                <button class="tool" aria-label="Стиль отображения"><svg><use href="#i-cube"/></svg></button><button class="caret" aria-label="Ещё"></button>
                <button class="tool" aria-label="Скрыть"><svg><use href="#i-glasses"/></svg></button><button class="caret" aria-label="Ещё"></button>
                <button class="tool" aria-label="Внешний вид"><svg><use href="#i-ball"/></svg></button>
                <button class="tool" aria-label="Сцена"><svg><use href="#i-scene"/></svg></button><button class="caret" aria-label="Ещё"></button>
                <button class="tool" aria-label="Параметры вида"><svg><use href="#i-display"/></svg></button><button class="caret" aria-label="Ещё"></button>
            </div>
            <button class="splitter" aria-label="Свернуть панель"><i></i><i></i><i></i></button>
        </section>
        <div class="edge"></div>
        <div class="task-tabs">
            <button aria-label="Ресурсы"><svg><use href="#i-home"/></svg></button>
            <button aria-label="Библиотека"><svg><use href="#i-library"/></svg></button>
            <button aria-label="Проводник"><svg><use href="#i-files"/></svg></button>
            <button aria-label="Палитра видов"><svg><use href="#i-palette"/></svg></button>
            <button class="active" aria-label="Внешние виды"><svg><use href="#i-ball"/></svg></button>
            <button aria-label="Свойства"><svg><use href="#i-props"/></svg></button>
        </div>
    </main>

    <nav class="sheet-tabs">
        <div class="nav-arrows">
            <button aria-label="Первая" disabled><svg><use href="#i-first"/></svg></button>
            <button aria-label="Назад" disabled><svg><use href="#i-back"/></svg></button>
            <button class="flip" aria-label="Вперёд" disabled><svg><use href="#i-back"/></svg></button>
            <button class="flip" aria-label="Последняя" disabled><svg><use href="#i-first"/></svg></button>
        </div>
        <button class="sheet active">Модель</button>
        <button class="sheet">Трехмерные виды</button>
        <button class="sheet with-icon"><svg><use href="#i-design"/></svg>Исследование проектирования 1</button>
        <button class="sheet">Анимация1</button>
        <button class="sheet study">Исследование движения 1</button>
    </nav>

    <footer class="status">
        <span class="edition">SOLIDWORKS Premium 2015 x64 Edition</span>
        <span>Недоопределенный</span>
        <span>Редактируется Сборка</span>
        <button class="setup">Настройка</button>
        <button class="help" aria-label="Справка">?</button>
        <button class="tool" aria-label="Метки"><svg><use href="#i-tag"/></svg></button>
    </footer>

    <div class="taskbar">
        <button aria-label="Пуск"><svg viewBox="0 0 32 32"><path d="M3 7 13 5.500V15.500H3zM14.500 5.300 29 3V15.500H14.500zM3 17H13V27L3 25.500zM14.500 17H29V29.500L14.500 27.200z" fill="#fff"/></svg></button>
        <button class="running" aria-label="Проводник"><svg viewBox="0 0 32 32"><path d="M1 6 3 3h8l2 3h17v22H1z" fill="#e6c65c"/><path d="M1 9h30l-1 19H2z" fill="#f7e28f"/><path d="M3 4h4v2H3z" fill="#2c4"/><path d="M12 6h4v2h-4z" fill="#d33"/><path d="M22 7h5v2h-5z" fill="#39d"/><path d="M5 30V22q1-4 5-4h12q5 0 6 4v8h-5v-6H10v6z" fill="#8fd0ee" stroke="#4ea0cc"/></svg></button>
        <button aria-label="Chrome"><svg viewBox="0 0 32 32"><circle cx="16" cy="16" r="14.500" fill="#fcc934"/><path d="M16 16 3.500 8.500A14.500 14.500 0 0 1 29 9.500H16z" fill="#e0463a"/><path d="M3.500 8.500A14.500 14.500 0 0 0 15 30.500L22 19 10 18z" fill="#2da94f"/><circle cx="16" cy="16" r="6.800" fill="#fff"/><circle cx="16" cy="16" r="5.400" fill="#4285f4"/></svg></button>
        <button aria-label="Ассистент"><svg viewBox="0 0 32 32"><path d="M12 5h6L9 22h10v5H1z" fill="#2fa8e8"/><path d="M12 5 1 27h4L16 7z" fill="#9ee0ff"/><path d="m18 5 13 22h-9l-5-9-4 4h-2z" fill="#f6b73c"/><path d="m18 5 13 22h-4L16 8z" fill="#ffe08a"/></svg></button>
        <button aria-label="Discord"><svg viewBox="0 0 32 32"><path d="M6 3h20q3 0 3 3v24l-5-4H6q-3 0-3-3V6q0-3 3-3z" fill="#6f84cf"/><path d="M8 11q4-3 8-2 4-1 8 2 3 5 2 10-3 2-5 2l-1-2h-8l-1 2q-2 0-5-2-1-5 2-10z" fill="#fff"/><circle cx="12.500" cy="16.500" r="2" fill="#6f84cf"/><circle cx="19.500" cy="16.500" r="2" fill="#6f84cf"/></svg></button>
        <button class="running" aria-label="Firefox"><svg viewBox="0 0 32 32"><circle cx="17" cy="14" r="13" fill="#2177b8"/><path d="M14 3q8-3 12 4-5 0-7 5t-6 0z" fill="#6cc2ea"/><path d="M4 5q0 3 3 5 3-1 6 0-1 3-4 4 0 6 6 6 5 0 7-3 2 5-3 7 7 1 9-7 1-6-1-10 4 7 4 13-2 11-14 11T2 20 4 5z" fill="#ee7421"/><path d="M26 6q7 9 4 16t-14 9q14-3 13-14 0-7-3-11z" fill="#ffc93c"/></svg></button>
        <button class="running" aria-label="Viber"><svg viewBox="0 0 32 32"><path d="M16 1q14 0 14 13t-14 13h-2l-5 5v-6Q2 23 2 14 2 1 16 1z" fill="#fff"/><path d="M16 3q12 0 12 11T16 25h-3l-2 3v-4Q4 22 4 14 4 3 16 3z" fill="#7c5cd6"/><path d="m10 8 3-1 2 4-2 2q1 3 4 5l2-2 4 3-2 3q-3 1-7-3-5-5-4-11z" fill="#fff"/><path d="M17 7q7 0 7 8m-6-5q3 0 3 4" fill="none" stroke="#fff" stroke-width="1.500"/></svg></button>
        <button class="running current" aria-label="SOLIDWORKS 2015"><svg viewBox="0 0 32 32"><path d="m1 7 14-6 16 4v17l-13 9L2 26z" fill="#c4141a"/><path d="m1 7 14-6 16 4-14 5z" fill="#f04a46"/><path d="m17 10 14-5v17l-14 9z" fill="#d81f23"/><text x="4" y="22" class="sw">S</text><text x="16" y="21" class="sw">W</text><text x="9" y="31" class="sw year">2015</text></svg></button>
        <div class="tray">
            <button aria-label="Показать скрытые значки"><svg viewBox="0 0 16 16"><path d="m4 10 4-4 4 4z" fill="#fff"/></svg></button>
            <button aria-label="Skype"><svg viewBox="0 0 16 16"><path d="M1 2q3-2 6-1 8 0 8 8 1 3-1 5-3 2-6 1-7 0-7-7-1-3 0-6z" fill="#7fba00"/><path d="m5 8 2 2 4-4" fill="none" stroke="#fff" stroke-width="1.800"/></svg></button>
            <button aria-label="Dropbox"><svg viewBox="0 0 16 16"><path d="m4 1 4 2.500L4 6 0 3.500zm8 0 4 2.500L12 6 8 3.500zM4 6l4 2.500L4 11 0 8.500zm8 0 4 2.500-4 2.500-4-2.500zM3 12l5-3 5 3-5 3z" fill="#fff"/><circle cx="11.500" cy="11.500" r="4" fill="#1fa34a"/><path d="m9.500 11.500 1.500 1.500 3-3" fill="none" stroke="#fff" stroke-width="1.200"/></svg></button>
            <button aria-label="TeamViewer"><svg viewBox="0 0 16 16"><path d="M0 0h16v16H0z" fill="#0e78d4"/><circle cx="8" cy="8" r="6.500" fill="#fff"/><path d="m2 8 4-3v2h4V5l4 3-4 3V9H6v2z" fill="#0e78d4"/><path d="M7 12h9v3H7z" fill="#7fd000"/></svg></button>
            <button aria-label="Сеть"><svg viewBox="0 0 16 16"><path d="M5.500 3.500h10v7h-10zM10 11v3M7 14.500h7M1 1h3v4H1zM2.500 5v9H5" fill="none" stroke="#fff" stroke-width="1.300"/></svg></button>
            <button aria-label="Громкость"><svg viewBox="0 0 16 16"><path d="M2 5h3l4-4v14l-4-4H2z" fill="#fff"/><path d="M11.500 5q2.500 3 0 6" fill="none" stroke="#fff" stroke-width="1.200"/></svg></button>
            <span class="lang">РУС</span>
            <time class="clock" datetime="2017-09-10T14:07">14:07<br>10.09.2017</time>
        </div>
    </div>
</body>
</html>
```
FILE: styles.css
```css
* {
    box-sizing: border-box;
}
body {
    margin: 0;
    height: 100vh;
    display: flex;
    flex-direction: column;
    overflow: hidden;
    background-color: #d6dade;
    color: #111;
    font-family: "Noto Sans", "Open Sans", sans-serif;
    font-size: 11px;
}
.defs {
    position: absolute;
}
button {
    margin: 0;
    padding: 0;
    border: none;
    background: none;
    color: inherit;
    font: inherit;
    cursor: pointer;
}
button:disabled {
    color: #7c8084;
    cursor: default;
}
svg {
    width: 16px;
    height: 16px;
    flex: none;
    display: block;
}
.tool {
    width: 18px;
    height: 18px;
    display: flex;
    align-items: center;
    justify-content: center;
}
.tool.wide {
    width: 23px;
}
.caret {
    width: 18px;
    height: 18px;
    display: flex;
    align-items: center;
    justify-content: center;
}
.caret::before,
.drop::after,
.more::after {
    content: "";
    border: 3px solid transparent;
    border-top: 4px solid #333;
    border-bottom: none;
}
.caret:disabled::before,
.drop:disabled::after,
.more:disabled::after {
    border-top-color: #8f9296;
}

/* Title bar */
.titlebar {
    height: 29px;
    flex: none;
    display: flex;
    align-items: center;
    background-color: #d6dade;
    border-top: 1px solid #f2f3f5;
    border-bottom: 1px solid #111;
}
.brand {
    width: 131px;
    height: 100%;
    display: flex;
    align-items: center;
    padding-left: 3px;
    gap: 5px;
    border-left: 5px solid #dc2a1e;
    background: linear-gradient(#3e444a, #23282d);
    color: #fff;
}
.brand-mark {
    width: 22px;
    height: 24px;
}
.brand-name {
    font: italic 14px Lato, sans-serif;
}
.brand-more {
    width: 10px;
    height: 100%;
    background-color: #8b8d90;
    color: #222;
    font-size: 8px;
}
.qat {
    display: flex;
    align-items: center;
    margin-left: 30px;
}
.qat .tool.wide {
    width: 22px;
}
.picker {
    display: flex;
    border: 1px solid #777;
    background-color: #e6e8eb;
}
.picker .tool {
    width: 21px;
    height: 22px;
}
.picker .caret {
    width: 12px;
    height: 22px;
}
.qat .narrow {
    width: 14px;
}
.pressed {
    background-color: #b2b4b8;
}
.doc-title {
    flex: 1;
    margin: 0;
    font-size: 11px;
    font-weight: normal;
    text-align: center;
}
.search {
    width: 249px;
    height: 24px;
    display: flex;
    align-items: center;
    padding-left: 5px;
    border: 1px solid #111;
    background-color: #eceef2;
}
.search input {
    flex: 1;
    min-width: 0;
    padding: 0 0 0 5px;
    border: none;
    background: none;
    font: inherit;
}
.search input::placeholder {
    color: #666;
    opacity: 1;
}
.search .caret {
    width: 16px;
}
.win-buttons {
    display: flex;
    align-items: center;
    padding-left: 6px;
}
.win-buttons .caret {
    width: 15px;
}

/* Ribbon */
.ribbon {
    height: 76px;
    flex: none;
    display: grid;
    grid-template-columns: 82px 94px 136px 62px 96px 71px 216px 122px 65px 64px 279px 61px 73px 79px 79px 1fr;
    padding: 4px 0 7px;
    background-color: #d6dade;
}
.sep {
    border-left: 1px solid #555;
}
.cmd {
    display: block;
    align-self: start;
    padding: 10px 0 12px;
    line-height: 13px;
    text-align: center;
    white-space: nowrap;
}
.cmd svg {
    margin: 0 auto 1px;
}
.cmd.drop {
    position: relative;
    padding: 3px 0 19px;
}
.cmd.drop::after {
    position: absolute;
    left: 50%;
    bottom: 4px;
    margin-left: -3px;
}
.cmd.tall {
    padding-bottom: 0;
}
.cmd.last {
    width: 84px;
}
.sketch {
    display: grid;
    grid-template-columns: repeat(7, 18px);
    align-content: space-between;
    padding: 0 5px;
}
.cmd-list {
    display: grid;
    align-content: space-between;
}
.cmd-list.two {
    grid-template-columns: 143px 1fr;
    padding-left: 4px;
}
.cmd-list button {
    height: 19px;
    display: flex;
    align-items: center;
    gap: 7px;
}
.more::after {
    margin-left: auto;
    margin-right: 5px;
}

/* Command tabs */
.tabs {
    height: 20px;
    flex: none;
    display: grid;
    grid-template-columns: 57fr 101fr 57fr 100fr 158fr 73fr 118fr 104fr 130fr 127fr 153fr 144fr 207fr 185fr 124fr 82fr;
    background-color: #f0f1f5;
    border-top: 1px solid #777;
}
.tabs > button {
    min-width: 0;
    padding-bottom: 3px;
    background-color: #a9abaf;
    border-right: 1px solid #111;
    border-bottom: 1px solid #111;
    line-height: 15px;
    white-space: nowrap;
}
.tabs .active {
    background-color: #dfe3e7;
    font-weight: bold;
}
.doc-buttons {
    display: flex;
    align-items: flex-end;
    gap: 5px;
    border-right: 12px solid #111;
}
.doc-buttons .tool {
    height: 15px;
}

/* Work area */
.workspace {
    flex: 1;
    min-height: 0;
    display: flex;
    position: relative;
}
.panel {
    width: 230px;
    flex: none;
    display: flex;
    flex-direction: column;
    padding-top: 4px;
    border-top: 1px solid #6b6f88;
    border-right: 2px solid #222;
    background-color: #e2e6eb;
}
.panel-tabs {
    height: 26px;
    display: flex;
    align-items: flex-end;
    border-bottom: 1px solid #111;
    background-color: #d6dade;
}
.panel-tabs button {
    width: 28px;
    height: 21px;
    padding-left: 6px;
    border-top: 1px solid #111;
    border-right: 1px solid #111;
    background-color: #a9abaf;
}
.panel-tabs .active {
    background-color: #e2e6eb;
}
.chevrons {
    margin-left: auto;
    padding-right: 5px;
    font-size: 18px;
    line-height: 24px;
}
.filter {
    height: 19px;
    display: flex;
    align-items: center;
    margin: 1px 0 2px 1px;
    padding-left: 5px;
    border: 1px solid #333;
    background-color: #f0f0f0;
}
.filter svg {
    width: 14px;
    height: 14px;
}
.filter .caret {
    width: 12px;
}
.filter input {
    flex: 1;
    min-width: 0;
    border: none;
    background: none;
}
.tree {
    flex: 1;
    min-height: 0;
    overflow: hidden;
    font-size: 12px;
}
.tree ul {
    margin: 0;
    padding: 0;
    list-style: none;
}
.tree > ul {
    border-bottom: 2px solid #0a6cf0;
}
.root,
.row {
    height: 18px;
    display: flex;
    align-items: center;
    gap: 5px;
    padding-left: 2px;
    white-space: nowrap;
}
.row {
    padding-left: 6px;
    background: repeating-linear-gradient(90deg, #888 0 1px, transparent 1px 2px) 11px 9px / 9px 1px no-repeat;
}
.row.leaf {
    padding-left: 21px;
}
.row.off {
    color: #8f9296;
}
.exp {
    flex: none;
    width: 9px;
    height: 9px;
    margin-right: 1px;
    border: 1px solid #8a8d94;
    background:
        linear-gradient(#1d3c9a, #1d3c9a) center / 5px 1px no-repeat,
        linear-gradient(#1d3c9a, #1d3c9a) center / 1px 5px no-repeat,
        #fafafa;
}
.exp.open {
    background: linear-gradient(#1d3c9a, #1d3c9a) center / 5px 1px no-repeat, #fafafa;
}
.tree li {
    background: repeating-linear-gradient(#888 0 1px, transparent 1px 2px) 10px 0 / 1px 100% no-repeat;
}
.tree li:last-child {
    background-size: 1px 9px;
}
.tree li ul {
    padding-left: 19px;
}
.hscroll {
    height: 16px;
    display: flex;
    margin-bottom: 3px;
    background-color: #efefef;
}
.hscroll button {
    width: 16px;
    border: 1px solid #aaa;
    background-color: #fff;
}
.hscroll button svg {
    width: 14px;
    height: 14px;
}
.track {
    flex: 1;
    padding-left: 1px;
}
.thumb {
    width: 33%;
    height: 100%;
    border: 1px solid #aaa;
    background-color: #fff;
}
.viewport {
    flex: 1;
    min-width: 0;
    position: relative;
    background:
        linear-gradient(transparent 50%, rgba(255, 255, 255, 0.9) 68%, #fff 76%, #f6f7fa),
        radial-gradient(ellipse 50% 75% at 72% 28%, #dbdeea, rgba(226, 229, 239, 0.7) 45%, transparent),
        linear-gradient(172deg, #fff 15%, #f4f6fa 35%, #e1e5ef 52%, #e6e9f2);
}
.model {
    width: 100%;
    height: 100%;
}
.solid path,
.solid ellipse {
    stroke: #080808;
    stroke-width: 4;
    stroke-linejoin: round;
}
.solid .line {
    fill: none;
}
.solid .thin {
    fill: none;
    stroke-width: 4;
}
.solid .teeth {
    fill: none;
    stroke: #14151a;
    stroke-width: 5;
}
.solid .cogs {
    fill: none;
    stroke-width: 7;
    stroke-dasharray: 9 5;
}
.dims path {
    fill: none;
    stroke: #8f8f8f;
    stroke-width: 3;
}
.dims .warm {
    stroke: #b08050;
}
.dims .head {
    fill: #858585;
}
.dims text {
    fill: #858585;
    font: bold 56px "Liberation Serif", serif;
}
.triad text {
    font: 36px "Liberation Serif", serif;
}
.hud {
    position: absolute;
    top: 7px;
    left: 0;
    right: 0;
    display: flex;
    justify-content: center;
    gap: 5px;
    padding-right: 4px;
}
.hud .caret {
    width: 9px;
}
.hud .caret::before {
    border-top-color: #888;
}
.splitter {
    position: absolute;
    top: 47%;
    left: -1px;
    width: 8px;
    height: 39px;
    display: flex;
    flex-direction: column;
    align-items: center;
    justify-content: space-evenly;
    border: 1px solid #222;
    border-left: none;
    background-color: #e2e6eb;
}
.splitter i {
    border: 2px solid transparent;
    border-right: 3px solid #222;
    border-left: none;
}
.edge {
    width: 12px;
    border-left: 7px solid #0b0b0c;
    background: linear-gradient(#2d3c50, #55617a);
}
.task-tabs {
    position: absolute;
    top: 40px;
    right: 0;
    width: 24px;
    border: 1px solid #111;
    border-right: none;
}
.task-tabs button {
    width: 100%;
    height: 24px;
    padding-left: 4px;
    border-bottom: 1px solid #111;
    background-color: #a9abaf;
    display: block;
}
.task-tabs button:last-child {
    border-bottom: none;
}
.task-tabs button.active {
    background-color: #f0f2f5;
}

/* Sheet tabs and status line */
.sheet-tabs {
    height: 16px;
    flex: none;
    display: flex;
    border-top: 1px solid #111;
    border-bottom: 1px solid #111;
    background-color: #e2e5e9;
}
.nav-arrows {
    width: 69px;
    display: flex;
    padding: 0 2px;
    border-right: 1px solid #111;
}
.nav-arrows button {
    width: 16px;
    border: 1px solid #96989b;
    background-color: #a9abaf;
}
.nav-arrows svg {
    width: 14px;
    height: 12px;
}
.flip {
    transform: rotate(180deg);
}
.sheet {
    padding: 0 12px 2px;
    border-right: 1px solid #111;
    background-color: #acadb0;
    line-height: 12px;
    white-space: nowrap;
}
.sheet.active {
    padding: 0 11px 2px;
    background-color: #dfe3e7;
    font-weight: bold;
}
.sheet.with-icon {
    display: flex;
    align-items: center;
    gap: 12px;
    padding-left: 4px;
    padding-right: 16px;
}
.sheet.study {
    padding-left: 16px;
    padding-right: 18px;
}
.status {
    height: 19px;
    flex: none;
    display: flex;
    align-items: center;
    gap: 18px;
    padding: 0 5px 0 2px;
    border-bottom: 1px solid #111;
    background-color: #d6dade;
}
.edition {
    flex: 1;
}
.setup {
    margin-left: 35px;
}
.setup::after {
    content: "";
    display: inline-block;
    margin: 0 0 2px 18px;
    border: 3px solid transparent;
    border-bottom: 3px solid #333;
    border-top: none;
}
.help {
    width: 13px;
    height: 13px;
    margin-right: 38px;
    border: 1px solid #1c3f8c;
    background-color: #fff;
    color: #18a020;
    font-weight: bold;
    line-height: 11px;
}

/* Windows taskbar */
.taskbar {
    height: 40px;
    flex: none;
    display: flex;
    gap: 4px;
    border-top: 1px solid #777e86;
    background: linear-gradient(90deg, #24313a, #2b3640 20%, #30435a 35%, #2f3f52 55%, #262f38 75%, #28333d);
    color: #fff;
}
.taskbar > button {
    width: 58px;
    padding: 0 13px;
}
.taskbar > button:first-child {
    width: 48px;
    padding: 0 8px;
}
.taskbar > button svg {
    width: 32px;
    height: 32px;
}
.taskbar .running {
    border: 1px solid #7d868e;
    background-color: #4f5a63;
    padding: 0 12px;
}
.taskbar .current {
    width: 54px;
    padding: 0 10px;
    background-color: #9a9fa4;
    border-color: #dde0e3;
    box-shadow: 3px 0 0 #5a6570, 4px 0 0 #dde0e3;
}
.sw {
    fill: #fff;
    font: bold 16px "Liberation Sans", sans-serif;
}
.sw.year {
    font-size: 10px;
}
.tray {
    margin-left: auto;
    display: flex;
    align-items: center;
    gap: 8px;
    padding-right: 14px;
    font-size: 12px;
}
.lang {
    padding: 0 8px;
}
.clock {
    line-height: 17px;
    text-align: center;
}
```
